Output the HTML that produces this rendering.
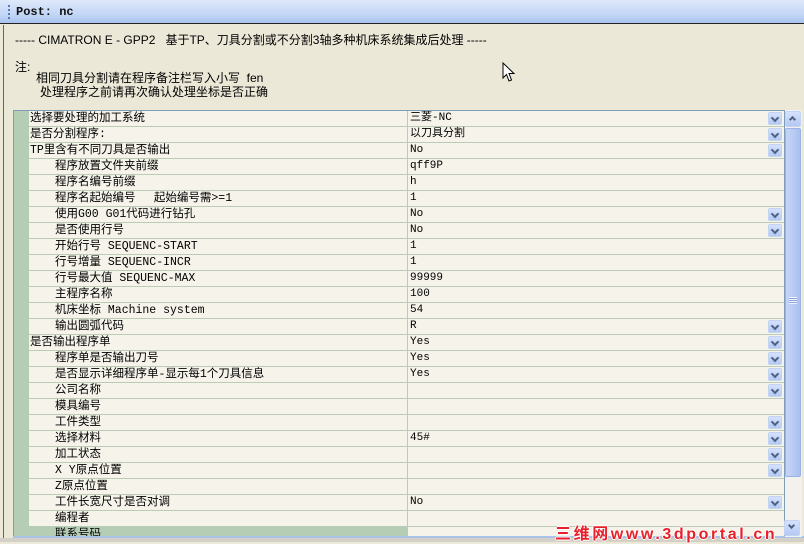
<!DOCTYPE html>
<html><head><meta charset="utf-8">
<style>
*{margin:0;padding:0;box-sizing:border-box}
body{width:804px;height:542px;overflow:hidden;background:#ECE9D8;position:relative;font-family:"Liberation Sans","Noto Sans CJK SC",sans-serif;font-size:12px;color:#000}
.a{position:absolute;white-space:nowrap}
#title{left:0;top:0;width:804px;height:24px;background:linear-gradient(#dfe9fb,#c4d7f6 60%,#a9c4ef);border-bottom:1px solid #222}
.grip{left:8px;top:5px;width:2px;height:15px;background:repeating-linear-gradient(#5a79b8 0 2px,transparent 2px 4px)}
#panel{left:3px;top:25px;width:801px;height:517px;border-left:1px solid #666;background:#ECE8D8}
.row{position:absolute;left:15px;width:755px;height:16px;border-bottom:1px solid #b9ccb7;background:#f6f3ea}
.lab{position:absolute;left:0;top:0;width:379px;height:15px;border-right:1px solid #b9ccb7;line-height:15px;font-size:11.5px;font-family:"Liberation Mono","Noto Sans CJK SC",monospace}
.val{position:absolute;left:381px;top:0;line-height:15px;font-family:"Liberation Mono","Noto Sans CJK SC",monospace;font-size:11px}
.dd{position:absolute;left:739px;top:1px;width:14px;height:13px;background:linear-gradient(#d6e2fb,#b3c8f3);border:1px solid #c3d3f5;border-radius:2px}
.dd:after{content:"";position:absolute;left:3px;top:2px;width:4px;height:4px;border-right:2px solid #4d6185;border-bottom:2px solid #4d6185;transform:rotate(45deg)}
</style></head><body>
<div id="title" class="a"></div>
<div class="a grip"></div>
<div class="a" style="left:16px;top:5px;font-family:'Liberation Mono',monospace;font-weight:bold;font-size:12px;color:#111">Post: nc</div>
<div id="panel" class="a"></div>
<div class="a" style="left:15px;top:31px;font-size:12px">----- CIMATRON E - GPP2&nbsp;&nbsp;&nbsp;基于TP、刀具分割或不分割3轴多种机床系统集成后处理 -----</div>
<div class="a" style="left:15px;top:58px">注:</div>
<div class="a" style="left:36px;top:69px">相同刀具分割请在程序备注栏写入小写&nbsp;&nbsp;fen</div>
<div class="a" style="left:40px;top:83px">处理程序之前请再次确认处理坐标是否正确</div>
<svg class="a" style="left:502px;top:62px" width="14" height="22" viewBox="0 0 14 22"><path d="M1 1 L1 16 L4.5 12.5 L7 19 L9.5 18 L7 11.5 L12 11.5 Z" fill="#fff" stroke="#000" stroke-width="1"/></svg>
<div class="a" style="left:13px;top:110px;width:772px;height:427px;border:1px solid #7f9db9;border-bottom:none;background:#f6f3ea;overflow:hidden">
<div class="a" style="left:0;top:0;width:15px;height:427px;background:#b5ccb5"></div>
<div id="rows"></div>
</div>
<div class="a" style="left:13px;top:536px;width:791px;height:2px;background:#aac2e8"></div>
<div class="a" style="left:0;top:538px;width:804px;height:4px;background:#d4d0c8"></div>
<div class="a" style="left:785px;top:110px;width:17px;height:427px;background:#f3f1ec"></div>
<div class="a" style="left:785px;top:111px;width:16px;height:16px;background:linear-gradient(#d6e2fb,#b3c8f3);border:1px solid #c3d3f5;border-radius:2px"></div>
<div class="a" style="left:790px;top:117px;width:5px;height:5px;border-left:2px solid #4d6185;border-top:2px solid #4d6185;transform:rotate(45deg)"></div>
<div class="a" style="left:785px;top:128px;width:16px;height:349px;background:linear-gradient(90deg,#c6d5f6,#b8ccf4 50%,#a9bfef);border:1px solid #9bb2e6;border-radius:2px"></div>
<div class="a" style="left:789px;top:297px;width:8px;height:7px;background:repeating-linear-gradient(#eef3fd 0 1px,#8ea6dc 1px 2px)"></div>
<div class="a" style="left:784px;top:520px;width:16px;height:16px;background:linear-gradient(#d6e2fb,#b3c8f3);border:1px solid #c3d3f5;border-radius:2px"></div>
<div class="a" style="left:789px;top:523px;width:5px;height:5px;border-right:2px solid #4d6185;border-bottom:2px solid #4d6185;transform:rotate(45deg)"></div>
<div class="a" style="left:555px;top:520px;font-size:16px;font-weight:bold;color:#e8202a;letter-spacing:2.6px;text-shadow:1px 0 #fff,-1px 0 #fff,0 1px #fff,0 -1px #fff">三维网www.3dportal.cn</div>
<script>
var R=[
[0,"选择要处理的加工系统","三菱-NC",1],
[0,"是否分割程序:","以刀具分割",1],
[0,"TP里含有不同刀具是否输出","No",1],
[1,"程序放置文件夹前缀","qff9P",0],
[1,"程序名编号前缀","h",0],
[1,"程序名起始编号　 起始编号需>=1","1",0],
[1,"使用G00 G01代码进行钻孔","No",1],
[1,"是否使用行号","No",1],
[1,"开始行号 SEQUENC-START","1",0],
[1,"行号增量 SEQUENC-INCR","1",0],
[1,"行号最大值 SEQUENC-MAX","99999",0],
[1,"主程序名称","100",0],
[1,"机床坐标 Machine system","54",0],
[1,"输出圆弧代码","R",1],
[0,"是否输出程序单","Yes",1],
[1,"程序单是否输出刀号","Yes",1],
[1,"是否显示详细程序单-显示每1个刀具信息","Yes",1],
[1,"公司名称","",1],
[1,"模具编号","",0],
[1,"工件类型","",1],
[1,"选择材料","45#",1],
[1,"加工状态","",1],
[1,"X Y原点位置","",1],
[1,"Z原点位置","",0],
[1,"工件长宽尺寸是否对调","No",1],
[1,"编程者","",0],
[1,"联系号码","",0]];
var h="";
R.forEach(function(r,i){
 var g=i==26?"background:#b5ccb5;":"";
 h+='<div class="row" style="top:'+(i*16)+'px"><div class="lab" style="'+g+'padding-left:'+(r[0]?26:1)+'px">'+r[1].replace(/</g,"&lt;").replace(/>/g,"&gt;")+'</div><div class="val">'+r[2]+'</div>'+(r[3]?'<div class="dd"></div>':'')+'</div>';
});
document.getElementById("rows").innerHTML=h;
</script>
</body></html>
